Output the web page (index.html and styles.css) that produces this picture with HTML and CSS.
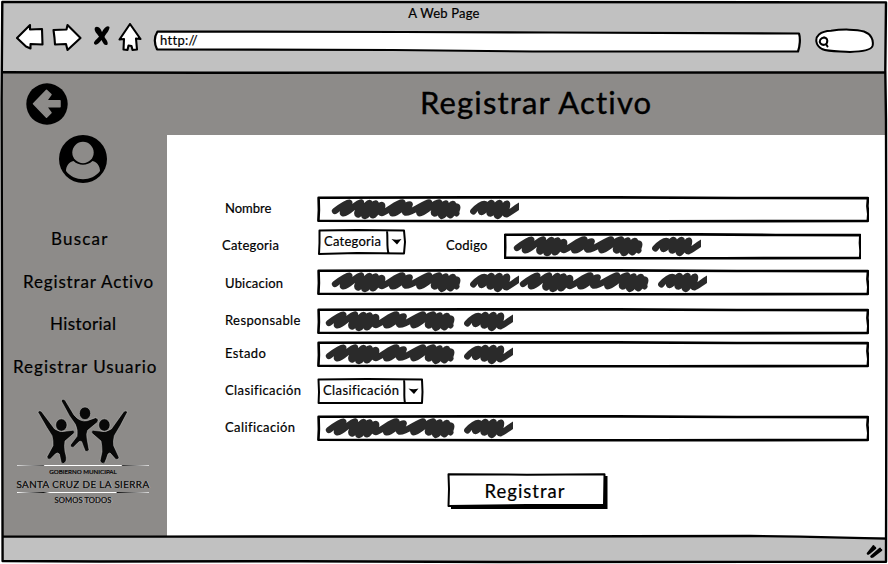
FILE: index.html
```html
<!DOCTYPE html>
<html lang="es">
<head>
<meta charset="utf-8">
<title>A Web Page</title>
<link rel="stylesheet" href="styles.css">
</head>
<body>
<svg class="defs" width="0" height="0" aria-hidden="true">
  <defs>
    <symbol id="scribble" viewBox="0 0 564 69">
      <path fill="none" stroke="#2a2a2a" stroke-width="19" stroke-linecap="round" stroke-linejoin="round" d="M12 42C28 30 48 16 55 17C58 25 32 44 36 49C46 53 80 14 90 16C94 22 74 48 80 52C84 58 108 16 116 18C120 24 92 56 102 57C112 58 126 18 134 19C140 24 118 56 126 55C136 52 146 22 153 24C158 30 142 48 152 48C166 46 202 14 214 16C218 22 178 42 184 49C194 53 222 22 236 22C240 28 214 42 224 47C240 50 282 16 294 16C298 22 258 42 266 49C276 52 312 14 324 16C330 22 302 46 310 49C316 54 336 18 344 19C348 24 324 54 332 57C342 58 358 18 366 21C370 28 350 52 358 55C364 54 370 28 376 28C384 28 372 46 376 49"/>
      <path fill="none" stroke="#2a2a2a" stroke-width="19" stroke-linecap="round" stroke-linejoin="round" d="M427 43C438 30 456 18 462 21C464 28 444 44 452 45C460 46 474 16 482 18C486 24 470 50 478 50C488 48 498 16 506 18C510 24 490 56 500 57C510 56 520 18 528 20C532 26 516 52 526 52C534 50 552 34 574 22"/>
    </symbol>
    <symbol id="frame" viewBox="0 0 552 27" preserveAspectRatio="none">
      <path fill="#fff" stroke="#000" stroke-width="2.6" stroke-linejoin="round" vector-effect="non-scaling-stroke" d="M1.600 1.800L150 1.400L300 1.400L420 2L551 2.100L550.4 10L551.300 18L550.8 25L340 25.200L200 25.300L1.400 24.800L1.900 14Z"/>
    </symbol>
  </defs>
</svg>
<div class="window">
  <header class="chrome">
    <div class="page-name"><span>A Web Page</span></div>
    <div class="toolbar">
      <svg class="nav-icons" width="126" height="32" viewBox="0 0 126 32">
        <g fill="#fff" stroke="#000" stroke-width="2.100" stroke-linejoin="round">
          <path d="M1 15L14 2L14 6.500L26 6L26.500 21.500L14.500 21L14.500 25.500L10 23.500Z"/>
          <path d="M37.500 7L50.500 6.500L51.500 2L64.500 15L51.500 27L50 21L39 21.500L38.500 15Z"/>
          <path d="M114 1L124.500 16L120 15.500L121 26.500L116.500 27L115.500 23L112.500 22.500L111.500 27L107.500 26.500L108 16L103.500 16.500Z"/>
        </g>
        <path d="M79 4.500C82 2 85 6 86 9C88 5 91 2 93.500 4C93.500 8 89.500 11 88.500 14C90 16.500 92.500 19 91.500 21.500C89 23.500 87 20 85.500 17C83 20 80 23.500 78 20.500C77.500 18 82 15.500 83 13.500C81 10.500 77.500 8 79 4.500Z"/>
      </svg>
      <div class="url">
        <svg class="outline" viewBox="0 0 648 23"><path fill="#fff" stroke="#000" stroke-width="2.200" stroke-linejoin="round" d="M4.500 1.500L250 2L400 2.500L646 3.500C647.500 8 647 16 645 21.500L380 21.500L240 20L4 19.300C1.500 14 1 7 4.500 1.500Z"/></svg>
        <span>http://</span>
      </div>
      <svg class="search" width="62" height="26" viewBox="0 0 62 26">
        <path fill="#fff" stroke="#000" stroke-width="2" d="M16 2.800C27 1 42 1.300 49 3.500C56 6 59 12 57.500 18C56 22 46 23.700 35 23.900C25 23 14 24 7 21C0 17 0 10 4 6.500C7 4 11 3 16 2.800Z"/>
        <path fill="none" stroke="#000" stroke-width="2" stroke-linecap="round" d="M9.500 9.500C5.500 9.500 3.800 13 5.500 15.500C8 18 12.500 17 12.300 12.500C12 10 11 9.500 8.500 9.500M11 16L12.500 18.500"/>
      </svg>
    </div>
  </header>

  <main class="page">
    <aside class="sidebar">
      <svg class="back" width="42" height="42" viewBox="0 0 42 42">
        <circle cx="21" cy="21" r="20.700"/>
        <path fill="#8d8b89" stroke="#8d8b89" stroke-linejoin="round" stroke-width="1.500" d="M7.500 20.700L20.500 7.200L25 11.500L20.500 17.800H34V23.800H20.500L25 29.800L20.500 34.200Z"/>
      </svg>
      <svg class="avatar" width="48" height="48" viewBox="0 0 48 48">
        <circle cx="24" cy="24" r="24"/>
        <path fill="#8d8b89" d="M14.500 26C10 27 7 31 7 36C15 47 33 47 41 36C41 31 38 27 33.500 26C28 31 20 31 14.500 26Z"/>
        <circle cx="24" cy="17.500" r="10.700" fill="#8d8b89"/>
      </svg>
      <nav class="menu">
        <a class="m1">Buscar</a>
        <a class="m2">Registrar Activo</a>
        <a class="m3">Historial</a>
        <a class="m4">Registrar Usuario</a>
      </nav>
      <div class="logo">
        <svg width="92" height="68" viewBox="111 27 276 204">
          <g fill="#080808" stroke="#c9c8c6" stroke-width="1.500">
            <path d="M114 70Q116 62 125 68L164 120Q180 132 200 126L218 124Q227 127 222 133L195 156Q192 172 195 188Q202 210 197 218Q190 227 184 222Q181 208 178 195Q172 188 165 196L152 209Q142 214 141 203L159 170Q160 155 156 140L140 115Z"/>
            <path d="M382 70Q380 62 371 68L334 120Q318 132 298 126L280 124Q271 127 276 133L303 156Q306 172 306 188L300 216Q306 227 314 222Q320 208 324 195Q330 188 334 196L347 211Q356 214 357 205L341 170Q339 155 343 140L362 108Z"/>
            <path d="M184 36Q186 28 195 33L222 78Q240 100 262 95L287 86Q297 89 293 99L263 124Q258 136 261 148L267 182Q262 190 256 187Q250 172 245 158Q240 154 235 160L220 175Q210 177 211 168L231 142Q234 122 226 106L208 80Z"/>
            <ellipse cx="184" cy="108" rx="17" ry="18.500"/>
            <ellipse cx="313" cy="108" rx="17" ry="18.500"/>
            <ellipse cx="255" cy="73" rx="17" ry="19"/>
          </g>
        </svg>
        <div class="rule"></div>
        <div class="tiny"><span>GOBIERNO MUNICIPAL</span></div>
        <div class="city"><span>SANTA CRUZ DE LA SIERRA</span></div>
        <div class="rule dark"></div>
        <div class="motto"><span>SOMOS TODOS</span></div>
      </div>
    </aside>

    <section class="body">
      <h1><span>Registrar Activo</span></h1>
      <form class="form">
        <div class="row r1"><label>Nombre</label>
          <div class="field"><svg class="outline"><use href="#frame"/></svg><svg class="ink"><use href="#scribble"/></svg></div></div>
        <div class="row r2"><label>Categoria</label>
          <div class="select cat">
            <svg class="outline" viewBox="0 0 89 27"><path fill="#fff" stroke="#000" stroke-width="2" stroke-linejoin="round" d="M2.500 1.500L40 1L87 1.500L88 13L87 24.500L40 24L2 25L2.500 14ZM70 1.500C71 10 69.500 18 71.500 24"/><path d="M74.500 10Q79.500 11.500 84.500 10L80 15.500Z"/></svg>
            <span>Categoria</span></div>
          <label class="code">Codigo</label>
          <div class="field short"><svg class="outline"><use href="#frame"/></svg><svg class="ink"><use href="#scribble"/></svg></div></div>
        <div class="row r3"><label>Ubicacion</label>
          <div class="field"><svg class="outline"><use href="#frame"/></svg><svg class="ink"><use href="#scribble"/></svg><svg class="ink"><use href="#scribble"/></svg></div></div>
        <div class="row r4"><label>Responsable</label>
          <div class="field near"><svg class="outline"><use href="#frame"/></svg><svg class="ink"><use href="#scribble"/></svg></div></div>
        <div class="row r5"><label>Estado</label>
          <div class="field near"><svg class="outline"><use href="#frame"/></svg><svg class="ink"><use href="#scribble"/></svg></div></div>
        <div class="row r6"><label>Clasificación</label>
          <div class="select cla">
            <svg class="outline" viewBox="0 0 107 27"><path fill="#fff" stroke="#000" stroke-width="2" stroke-linejoin="round" d="M1.500 1.500L50 1L105 1.500L105.500 14L105 25L50 25L1.600 25L2 14ZM87 1.500C88 10 86.500 18 88 25"/><path d="M91.500 10.500Q96.500 12 101.500 10.500L97 16Z"/></svg>
            <span>Clasificación</span></div></div>
        <div class="row r7"><label>Calificación</label>
          <div class="field near"><svg class="outline"><use href="#frame"/></svg><svg class="ink"><use href="#scribble"/></svg></div></div>
        <button type="button" class="submit">
          <svg class="outline" viewBox="0 0 161 36"><path d="M4 32L157 32L157 3L160.500 3L160.500 36L4 36Z"/><path fill="#fff" stroke="#000" stroke-width="2" stroke-linejoin="round" d="M1.500 1.300L80 1.700L157.500 1.300L157 32L80 32L1.500 33L2 16Z"/></svg>
          <span>Registrar</span>
        </button>
      </form>
    </section>
  </main>

  <footer class="status">
    <svg width="18" height="15" viewBox="0 0 18 15"><path fill="none" stroke="#000" stroke-width="2.600" stroke-linecap="round" stroke-linejoin="round" d="M2 9.500L7.500 2.500L3 9L9 4M5.500 12.500L14 5L6.500 12.500L15 6"/></svg>
  </footer>

  <svg class="window-lines" width="888" height="564" viewBox="0 0 888 564" aria-hidden="true">
    <g fill="none" stroke="#000" stroke-width="2.400" stroke-linejoin="round">
      <path d="M2.300 2L440 2L886 2.400L885.300 70L886 120L886.500 350L886 561.800L500 562L300 561.200L100 561.500L2.600 561L2 300L1.600 100Z"/>
      <path d="M2 72.200L200 72.800L500 72.600L886 72.500"/>
      <path d="M2 536.600L150 536.600L500 536.500L750 536L800 536.600L886 538.600"/>
    </g>
  </svg>
</div>
</body>
</html>
```

FILE: styles.css
```css
* { box-sizing: border-box; }

body {
  margin: 0;
  background: #fff;
  color: #000;
  font: 13px/16px Lato, "Open Sans", sans-serif;
  -webkit-text-stroke: .2px #000;
}

.defs { position: absolute; }
svg { display: block; flex: none; }
span, a, label { white-space: nowrap; }

.window {
  position: relative;
  width: 888px;
  height: 564px;
  padding: 2px;
  display: grid;
  grid-template-rows: 71px 464px 25px;
}

.window-lines { position: absolute; inset: 0; pointer-events: none; }

.outline { position: absolute; inset: 0; width: 100%; height: 100%; }

/* browser chrome */
.chrome { background: #c1c1c1; }
.page-name { height: 21px; padding-top: 3px; text-align: center; letter-spacing: .2px; }
.toolbar { display: flex; align-items: flex-start; padding-left: 14px; }
.url { position: relative; width: 648px; height: 23px; margin: 7px 0 0 11px; padding: 2px 0 0 7px; letter-spacing: .3px; }
.url span { position: relative; }
.search { margin: 5px 0 0 14px; }

/* page */
.page { display: grid; grid-template-columns: 165px 1fr; background: #8d8b89; }
.sidebar { display: flex; flex-direction: column; align-items: flex-start; }
.back { margin: 10px 0 0 24px; }
.avatar { margin: 10px 0 0 57px; }
.menu { display: flex; flex-direction: column; gap: 20.700px; margin-top: 45px; font-size: 17px; line-height: 22px; }
.m1 { margin-left: 49px; letter-spacing: 1.200px; }
.m2 { margin-left: 21px; letter-spacing: .85px; }
.m3 { margin-left: 48px; letter-spacing: .4px; }
.m4 { margin-left: 11px; letter-spacing: 1px; }

.logo { margin: 20px 0 0 13px; width: 136px; color: #080808; text-align: center; }
.logo svg { margin-left: 22px; overflow: visible; }
.rule { height: 1px; margin: -1px 2px 0; background: linear-gradient(90deg, #ddd, #555 20%, #fff 21%, #fff 79%, #333 80%, #ddd); }
.rule.dark { margin-top: 1px; background: linear-gradient(90deg, #fff, #111 20%, #fff 25%, #fff 75%, #111 76%, #ddd); }
.tiny { margin-top: 2px; font-size: 6.200px; line-height: 8px; }
.city { margin-top: 1px; font-size: 10px; line-height: 14px; letter-spacing: .3px; text-shadow: 1px 0 0 #b5b3b1; }
.motto { margin-top: 1px; font-size: 7.800px; line-height: 12px; text-shadow: 1px 0 0 #c5c3c1; }

.body { display: grid; grid-template-rows: 62px 1fr; margin-right: 1px; }
h1 { margin: 0; padding: 10px 0 0 253px; font-size: 31px; font-weight: 400; line-height: 38px; letter-spacing: 1.150px; -webkit-text-stroke-width: .4px; }
.form { background: #fff; padding: 61px 0 0 55px; }

.row { display: flex; align-items: flex-start; }
.row label { width: 95px; padding: 4px 0 0 3px; letter-spacing: .4px; }
.r1 { height: 33px; }
.r2 { height: 40px; }
.r3 { height: 39px; }
.r4 { height: 33px; }
.r5 { height: 37px; }
.r6 { height: 37px; }
.r7 { height: 58px; }
.r1 label { letter-spacing: 0; }
.r2 > label:first-child { padding: 8px 0 0 0; letter-spacing: .25px; }
.r2 .code { width: 98px; padding: 8px 0 0 40px; letter-spacing: .2px; }
.r3 label { padding-top: 6px; letter-spacing: .2px; }

.field { position: relative; width: 552px; height: 27px; display: flex; padding: 1px 0 0 13.500px; }
.field.near { padding-left: 7.500px; }
.field.short { width: 357px; margin-top: 4px; padding-left: 8.500px; }
.ink { position: relative; width: 188px; height: 23px; }

.select { position: relative; height: 27px; padding: 4px 0 0 6px; letter-spacing: .4px; }
.cat { width: 89px; padding-left: 7px; letter-spacing: .25px; }
.cla { width: 107px; }
.select span { position: relative; }

.submit {
  position: relative;
  display: block;
  width: 161px;
  height: 36px;
  margin: 0 0 0 225px;
  padding: 0 5px 1px 0;
  border: 0;
  background: none;
  color: #000;
  font: 18.500px/22px Lato, "Open Sans", sans-serif;
  letter-spacing: 1px;
}
.submit span { position: relative; }

/* status bar */
.status { display: flex; justify-content: flex-end; padding: 7px 2px 0 0; background: #c1c1c1; }
```
